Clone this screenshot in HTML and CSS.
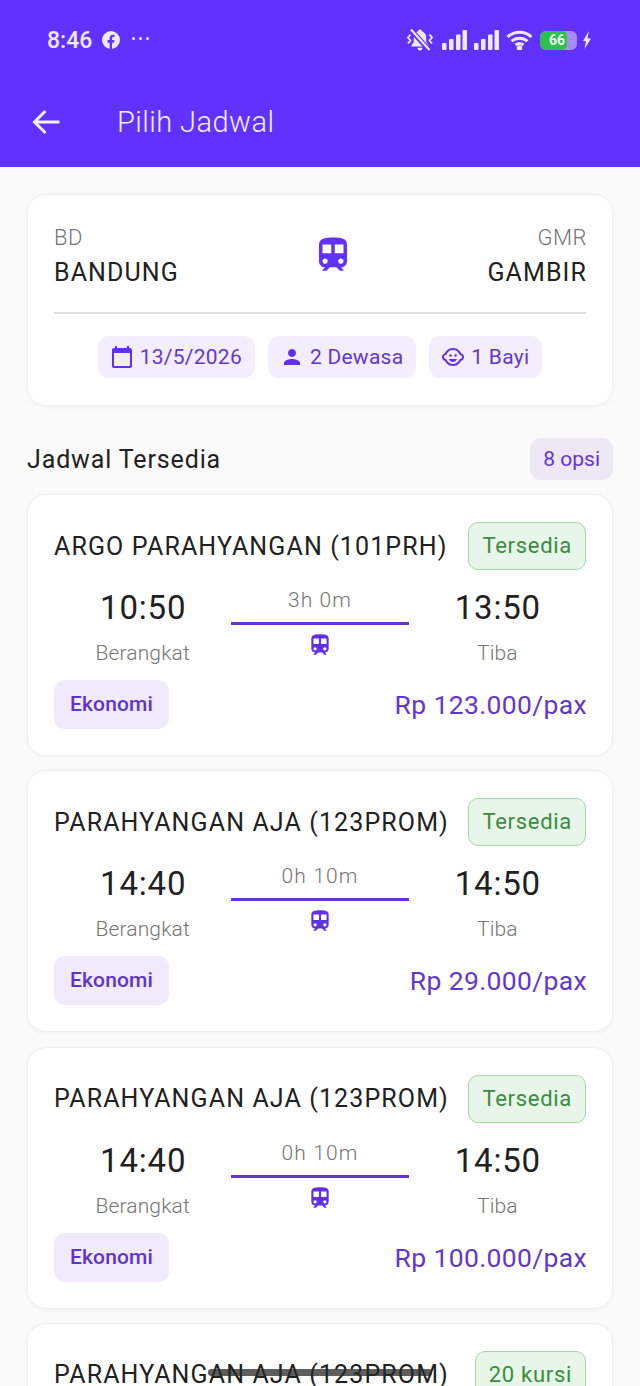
FILE: index.html
```html
<!DOCTYPE html>
<html lang="id">
<head>
<meta charset="utf-8">
<title>Pilih Jadwal</title>
<link rel="stylesheet" href="styles.css">
</head>
<body>
<svg class="defs" width="0" height="0" aria-hidden="true">
  <symbol id="train" viewBox="0 0 24 24"><path d="M12 2c-4 0-8 .5-8 4v9.5C4 17.43 5.57 19 7.5 19L6 20.5v.5h2.23l2-2H14l2 2h2v-.5L16.5 19c1.93 0 3.5-1.57 3.5-3.5V6c0-3.5-3.58-4-8-4zM7.5 17c-.83 0-1.5-.67-1.5-1.5S6.67 14 7.5 14s1.5.67 1.5 1.5S8.33 17 7.5 17zm3.5-6H6V6h5v5zm2 0V6h5v5h-5zm3.5 6c-.83 0-1.5-.67-1.5-1.5s.67-1.5 1.5-1.5 1.5.67 1.5 1.5-.67 1.5-1.5 1.5z"/></symbol>
  <symbol id="signal" viewBox="0 0 26 20"><rect x="1" y="13" width="4.500" height="7" rx="1"/><rect x="8" y="9" width="4.500" height="11" rx="1"/><rect x="15" y="4.500" width="4.500" height="15.500" rx="1"/><rect x="21.500" y="0" width="4.500" height="20" rx="1"/></symbol>
</svg>
<div class="screen">
  <header class="header">
    <div class="status">
      <div class="status-left">
        <span class="clock">8:46</span>
        <svg class="fb" viewBox="0 0 18 18"><circle cx="9" cy="9" r="9" fill="#f1e8ff"/><path d="M7.6 18v-6.3H5.6V9h2V7.2c0-2.2 1.2-3.4 3.2-3.4.9 0 1.7.1 1.7.1v2.2h-1.1c-1.1 0-1.4.7-1.4 1.4V9h2.4l-.4 2.7h-2V18z" fill="#6131ff"/></svg>
        <span class="dots"><i></i><i></i><i></i></span>
      </div>
      <div class="status-right">
        <svg class="bell" viewBox="0 0 26 24" fill="#f1e8ff"><path d="M13 1.500c-1.100 0-1.800.8-1.800 1.700C8.300 4 6.800 6.400 6.800 9v5l-2.300 3.200V18.500h17v-1.300L19.200 14V9c0-2.600-1.500-5-4.400-5.800 0-.9-.7-1.700-1.800-1.700zM10.500 19.800h5c0 1.500-1.100 2.700-2.500 2.700s-2.500-1.200-2.500-2.700z"/><path d="M3.500 1.500l19 21" stroke="#6131ff" stroke-width="5"/><path d="M4 1.500l18.500 20.500" stroke="#f1e8ff" stroke-width="2.200"/><path d="M3.500 6.500L1 9.500 3.500 12.500 1 15.500M22.500 6.500L25 9.500 22.500 12.500 25 15.500" fill="none" stroke="#f1e8ff" stroke-width="1.800"/></svg>
        <svg class="signal first"><use href="#signal"/></svg>
        <svg class="signal"><use href="#signal"/></svg>
        <svg class="wifi" viewBox="0 0 28 20" fill="none" stroke="#f1e8ff" stroke-width="3"><path d="M1.500 7C8.500.8 18.500.8 25.500 7"/><path d="M5.500 11.200c4.700-4 11.300-4 16 0"/><path d="M9.500 15c2.500-1.900 5.500-1.900 8 0"/><circle cx="13.500" cy="18" r="1.200" fill="#f1e8ff"/></svg>
        <span class="battery"><span class="battery-level">66</span></span>
        <svg class="bolt" viewBox="0 0 10 18" fill="#f1e8ff"><path d="M7 0L1 10h3l-1.500 8L9 7.500H5.500z"/></svg>
      </div>
    </div>
    <div class="appbar">
      <svg class="back" viewBox="0 0 28 26" fill="none" stroke="#f5efff" stroke-width="3"><path d="M27.500 13H3M13.500 2L2.500 13l11 11"/></svg>
      <h1 class="title">Pilih Jadwal</h1>
    </div>
  </header>

  <main class="content">
    <section class="card summary">
      <div class="route">
        <div class="station">
          <span class="code">BD</span>
          <span class="city">BANDUNG</span>
        </div>
        <svg class="route-icon"><use href="#train"/></svg>
        <div class="station end">
          <span class="code">GMR</span>
          <span class="city">GAMBIR</span>
        </div>
      </div>
      <div class="divider"></div>
      <div class="chips">
        <span class="chip"><svg viewBox="0 0 24 24"><path d="M20 3h-1V1h-2v2H7V1H5v2H4c-1.100 0-2 .9-2 2v16c0 1.100.9 2 2 2h16c1.100 0 2-.9 2-2V5c0-1.100-.9-2-2-2zm0 18H4V8h16v13z"/></svg>13/5/2026</span>
        <span class="chip"><svg viewBox="0 0 24 24"><path d="M12 12c2.210 0 4-1.790 4-4s-1.790-4-4-4-4 1.790-4 4 1.790 4 4 4zm0 2c-2.670 0-8 1.340-8 4v2h16v-2c0-2.660-5.330-4-8-4z"/></svg>2 Dewasa</span>
        <span class="chip"><svg viewBox="0 0 24 24"><circle cx="14.500" cy="10.500" r="1.250"/><circle cx="9.500" cy="10.500" r="1.250"/><path d="M16.100 14H7.900c.8 2 2.200 3 4.100 3s3.300-1 4.100-3z"/><path d="M22.940 11.340c-.25-1.510-1.360-2.740-2.810-3.170-.53-1.120-1.280-2.100-2.190-2.910C16.360 3.850 14.280 3 12 3s-4.360.85-5.940 2.260c-.92.81-1.670 1.800-2.190 2.910-1.450.43-2.560 1.650-2.810 3.170-.04.21-.06.43-.06.66 0 .23.02.45.06.66.25 1.510 1.360 2.740 2.810 3.170.52 1.110 1.270 2.090 2.170 2.890C7.620 20.140 9.710 21 12 21s4.380-.86 5.970-2.280c.9-.8 1.650-1.790 2.170-2.890 1.440-.43 2.550-1.650 2.800-3.170.04-.21.06-.43.06-.66 0-.23-.02-.45-.06-.66zM19 14c-.1 0-.19-.02-.29-.03-.2.67-.49 1.290-.86 1.860C16.600 17.740 14.450 19 12 19s-4.600-1.260-5.850-3.170c-.37-.57-.66-1.190-.86-1.860-.1.01-.19.03-.29.03-1.100 0-2-.9-2-2s.9-2 2-2c.1 0 .19.02.29.03.2-.67.49-1.290.86-1.860C7.400 6.260 9.550 5 12 5s4.600 1.260 5.850 3.170c.37.57.66 1.190.86 1.860.1-.01.19-.03.29-.03 1.100 0 2 .9 2 2s-.9 2-2 2z"/></svg>1 Bayi</span>
      </div>
    </section>

    <div class="section-head">
      <h2 class="section-title">Jadwal Tersedia</h2>
      <span class="pill">8 opsi</span>
    </div>

    <section class="card trip">
      <div class="trip-head"><span class="trip-name">ARGO PARAHYANGAN (101PRH)</span><span class="tag">Tersedia</span></div>
      <div class="times">
        <div class="point"><span class="time">10:50</span><span class="label">Berangkat</span></div>
        <div class="mid"><span class="duration">3h 0m</span><span class="line"></span><svg class="mid-icon"><use href="#train"/></svg></div>
        <div class="point"><span class="time">13:50</span><span class="label">Tiba</span></div>
      </div>
      <div class="trip-foot"><span class="class-chip">Ekonomi</span><span class="price">Rp 123.000/pax</span></div>
    </section>

    <section class="card trip">
      <div class="trip-head"><span class="trip-name">PARAHYANGAN AJA (123PROM)</span><span class="tag">Tersedia</span></div>
      <div class="times">
        <div class="point"><span class="time">14:40</span><span class="label">Berangkat</span></div>
        <div class="mid"><span class="duration">0h 10m</span><span class="line"></span><svg class="mid-icon"><use href="#train"/></svg></div>
        <div class="point"><span class="time">14:50</span><span class="label">Tiba</span></div>
      </div>
      <div class="trip-foot"><span class="class-chip">Ekonomi</span><span class="price">Rp 29.000/pax</span></div>
    </section>

    <section class="card trip">
      <div class="trip-head"><span class="trip-name">PARAHYANGAN AJA (123PROM)</span><span class="tag">Tersedia</span></div>
      <div class="times">
        <div class="point"><span class="time">14:40</span><span class="label">Berangkat</span></div>
        <div class="mid"><span class="duration">0h 10m</span><span class="line"></span><svg class="mid-icon"><use href="#train"/></svg></div>
        <div class="point"><span class="time">14:50</span><span class="label">Tiba</span></div>
      </div>
      <div class="trip-foot"><span class="class-chip">Ekonomi</span><span class="price">Rp 100.000/pax</span></div>
    </section>

    <section class="card trip">
      <div class="trip-head"><span class="trip-name">PARAHYANGAN AJA (123PROM)</span><span class="tag">20 kursi</span></div>
    </section>
  </main>
  <div class="home-bar"></div>
</div>
</body>
</html>
```

FILE: styles.css
```css
* { box-sizing: border-box; }
html, body { margin: 0; padding: 0; }
body { font-family: Roboto, "Noto Sans", sans-serif; background: #fafafa; color: #212121; }
.defs { position: absolute; }
.screen { position: relative; width: 640px; height: 1386px; overflow: hidden; }

.header { height: 167px; background: #6131ff; color: #f5efff; display: flex; flex-direction: column; }
.status { height: 80px; padding: 0 48px 0 47px; display: flex; align-items: center; justify-content: space-between; }
.status-left { display: flex; align-items: center; gap: 10px; }
.clock { font-size: 23px; font-weight: 500; color: #f1e8ff; }
.fb { width: 18px; height: 18px; }
.dots { display: flex; gap: 4px; margin-left: 2px; margin-bottom: 3px; }
.dots i { width: 3px; height: 3px; border-radius: 50%; background: #f1e8ff; }
.status-right { display: flex; align-items: center; gap: 6px; }
.bell { width: 26px; height: 24px; }
.signal { width: 26px; height: 20px; fill: #f1e8ff; }
.signal.first { margin-left: 2px; }
.wifi { width: 28px; height: 20px; margin-left: 1px; }
.battery { width: 37px; height: 19px; border-radius: 6px; background: #a88cf5; overflow: hidden; display: flex; }
.battery-level { background: #2fbf4d; color: #f1fff1; font-size: 14px; font-weight: 700; line-height: 19px; text-align: center; border-radius: 5px; padding-left: 7px; width: 27px; }
.bolt { width: 10px; height: 18px; margin-left: -1px; }

.appbar { flex: 1; display: flex; align-items: center; padding: 0 0 4px 32px; }
.back { width: 28px; height: 26px; }
.title { margin: 0 0 0 57px; font-size: 29px; font-weight: 300; letter-spacing: .45px; color: #f5efff; }

.content { padding: 27px 27px 0; display: flex; flex-direction: column; }
.card { background: #fff; border: 1px solid #efefef; border-radius: 19px; box-shadow: 0 1px 4px rgba(0,0,0,.04); padding: 26px; }

.summary { height: 212px; }
.route { display: flex; align-items: center; justify-content: space-between; height: 67px; padding-top: 4px; }
.station { display: flex; flex-direction: column; gap: 7px; }
.station.end { align-items: flex-end; margin-right: -1px; }
.code { font-size: 22px; font-weight: 300; line-height: 26px; letter-spacing: .5px; color: #757575; }
.city { font-size: 25px; line-height: 30px; letter-spacing: 1.1px; color: #212121; }
.route-icon { width: 42px; height: 42px; fill: #6131ff; margin-bottom: 4px; }
.divider { height: 2px; background: #e0e0e0; margin-top: 24px; }
.chips { display: flex; justify-content: center; gap: 13px; margin-top: 22px; }
.chip { height: 42px; padding: 0 13px 0 12px; border-radius: 11px; background: #f3eefd; color: #6238cc; font-size: 21px; letter-spacing: .25px; display: flex; align-items: center; gap: 6px; }
.chip svg { width: 24px; height: 24px; fill: #6131e8; }

.section-head { display: flex; align-items: center; justify-content: space-between; margin-top: 32px; height: 42px; }
.section-title { margin: 0; font-size: 25px; font-weight: 400; letter-spacing: .87px; color: #212121; }
.pill { height: 42px; padding: 0 13px; border-radius: 11px; background: #ede7f6; color: #6238cc; font-size: 21px; line-height: 42px; }

.trip { height: 262px; margin-top: 14.300px; padding-top: 27px; }
.section-head + .trip { margin-top: 14px; }
.trip-head { display: flex; align-items: center; justify-content: space-between; }
.trip-name { font-size: 25px; letter-spacing: 1.12px; color: #212121; white-space: nowrap; }
.tag { height: 48px; padding: 0 13px; border: 1.500px solid #a5d6a7; border-radius: 10px; background: #e8f5e9; color: #388e3c; font-size: 22px; letter-spacing: .7px; line-height: 46px; white-space: nowrap; }
.times { display: grid; grid-template-columns: 1fr 1fr 1fr; margin-top: 15px; }
.point, .mid { display: flex; flex-direction: column; align-items: center; }
.time { font-size: 33px; letter-spacing: .8px; line-height: 46px; margin-right: -1px; color: #212121; }
.label { font-size: 21px; font-weight: 300; letter-spacing: .15px; line-height: 26px; margin-top: 9px; color: #757575; }
.duration { font-size: 21px; font-weight: 300; letter-spacing: 1.1px; line-height: 26px; margin-top: 2px; color: #757575; }
.line { width: 100%; height: 3px; margin-top: 9px; background: #6535d8; }
.mid-icon { width: 26px; height: 26px; margin-top: 7px; fill: #6131e8; }
.trip-foot { display: flex; align-items: center; justify-content: space-between; margin-top: 14px; }
.class-chip { height: 49px; padding: 0 16px; border-radius: 11px; background: #f0eafb; color: #5e35c9; font-size: 21px; font-weight: 500; letter-spacing: .15px; line-height: 49px; }
.price { font-size: 26.500px; font-weight: 400; letter-spacing: .35px; color: #6238cc; margin-right: -1px; }

.home-bar { position: absolute; left: 208px; top: 1369px; width: 224px; height: 7px; border-radius: 3px; background: rgba(40,40,40,.75); }
```
